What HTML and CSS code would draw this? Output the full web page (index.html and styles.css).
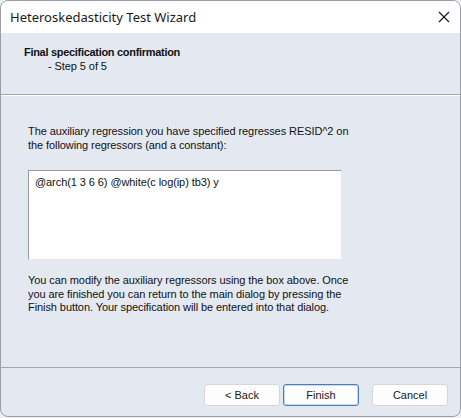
FILE: index.html
```html
<!DOCTYPE html>
<html>
<head>
<meta charset="utf-8">
<link rel="stylesheet" href="styles.css">
</head>
<body>
<div class="window">
  <div class="titlebar">
    <span class="title">Heteroskedasticity Test Wizard</span>
    <span class="close"><svg width="12" height="12" viewBox="0 0 12 12"><path d="M1 1 L11 11 M11 1 L1 11" stroke="#1a1a1a" stroke-width="1.2" fill="none"/></svg></span>
  </div>
  <div class="header">
    <div class="h-title">Final specification confirmation</div>
    <div class="h-step">- Step 5 of 5</div>
  </div>
  <div class="content">
    <p class="para first">The auxiliary regression you have specified regresses RESID^2 on<br>the following regressors (and a constant):</p>
    <div class="textbox">@arch(1 3 6 6) @white(c log(ip) tb3) y</div>
    <p class="para second">You can modify the auxiliary regressors using the box above. Once<br>you are finished you can return to the main dialog by pressing the<br>Finish button. Your specification will be entered into that dialog.</p>
  </div>
  <div class="footer">
    <button class="btn">&lt; Back</button>
    <button class="btn default">Finish</button>
    <button class="btn cancel">Cancel</button>
  </div>
</div>
</body>
</html>
```
FILE: styles.css
```css
html, body {
  margin: 0;
  padding: 0;
  background: #f0f0f0;
}
.window {
  width: 459px;
  height: 415px;
  border: 1px solid #9a9ea6;
  border-radius: 8px;
  overflow: hidden;
  background: #e4e9f1;
  display: flex;
  flex-direction: column;
  font-family: "Liberation Sans", Arial, sans-serif;
  font-size: 11px;
  letter-spacing: -0.08px;
  color: #111;
}
.titlebar {
  height: 32px;
  background: #ffffff;
  display: flex;
  align-items: center;
  justify-content: space-between;
  padding: 0 9px 0 9px;
  flex: none;
}
.title {
  font-family: "Noto Sans", sans-serif;
  font-size: 13px;
  letter-spacing: 0;
  color: #1a1a1a;
  margin-top: -1px;
}
.close {
  display: flex;
  margin-right: 1px;
  margin-top: 0;
}
.header {
  height: 62px;
  flex: none;
  border-bottom: 1px solid #a3a8b0;
  box-shadow: 0 1px 0 #ffffff;
  padding: 13px 0 0 23px;
  box-sizing: border-box;
}
.h-title {
  font-weight: bold;
  letter-spacing: -0.3px;
  line-height: 13px;
}
.h-step {
  padding-left: 24px;
  margin-top: 1px;
  line-height: 13px;
}
.content {
  flex: none;
  height: 273px;
  border-bottom: 1px solid #a3a8b0;
  padding: 30px 0 0 27px;
  box-sizing: border-box;
}
.para {
  margin: 0;
  line-height: 13.5px;
}
.textbox {
  width: 314px;
  height: 90px;
  margin-top: 18px;
  background: #fff;
  border-top: 1px solid #9a9a9a;
  border-left: 1px solid #9a9a9a;
  border-right: 1px solid #e8e8e8;
  border-bottom: 1px solid #e8e8e8;
  box-sizing: border-box;
  padding: 5px 0 0 6px;
  line-height: 13px;
}
.para.second {
  margin-top: 14px;
}
.footer {
  flex: 1;
  display: flex;
  align-items: flex-start;
  justify-content: flex-end;
  padding: 16px 12px 0 0;
}
.btn {
  width: 76px;
  height: 22px;
  margin: 0;
  padding: 0;
  background: #fdfdfd;
  border: 1px solid #d4d6da;
  border-radius: 3px;
  font-family: "Liberation Sans", Arial, sans-serif;
  font-size: 11px;
  color: #1a1a1a;
}
.btn.default {
  margin-left: 3px;
  border: 1px solid #4a7cc0;
  box-shadow: inset 0 0 0 1px #c8daf0;
}
.btn.cancel {
  margin-left: 13px;
}
```
